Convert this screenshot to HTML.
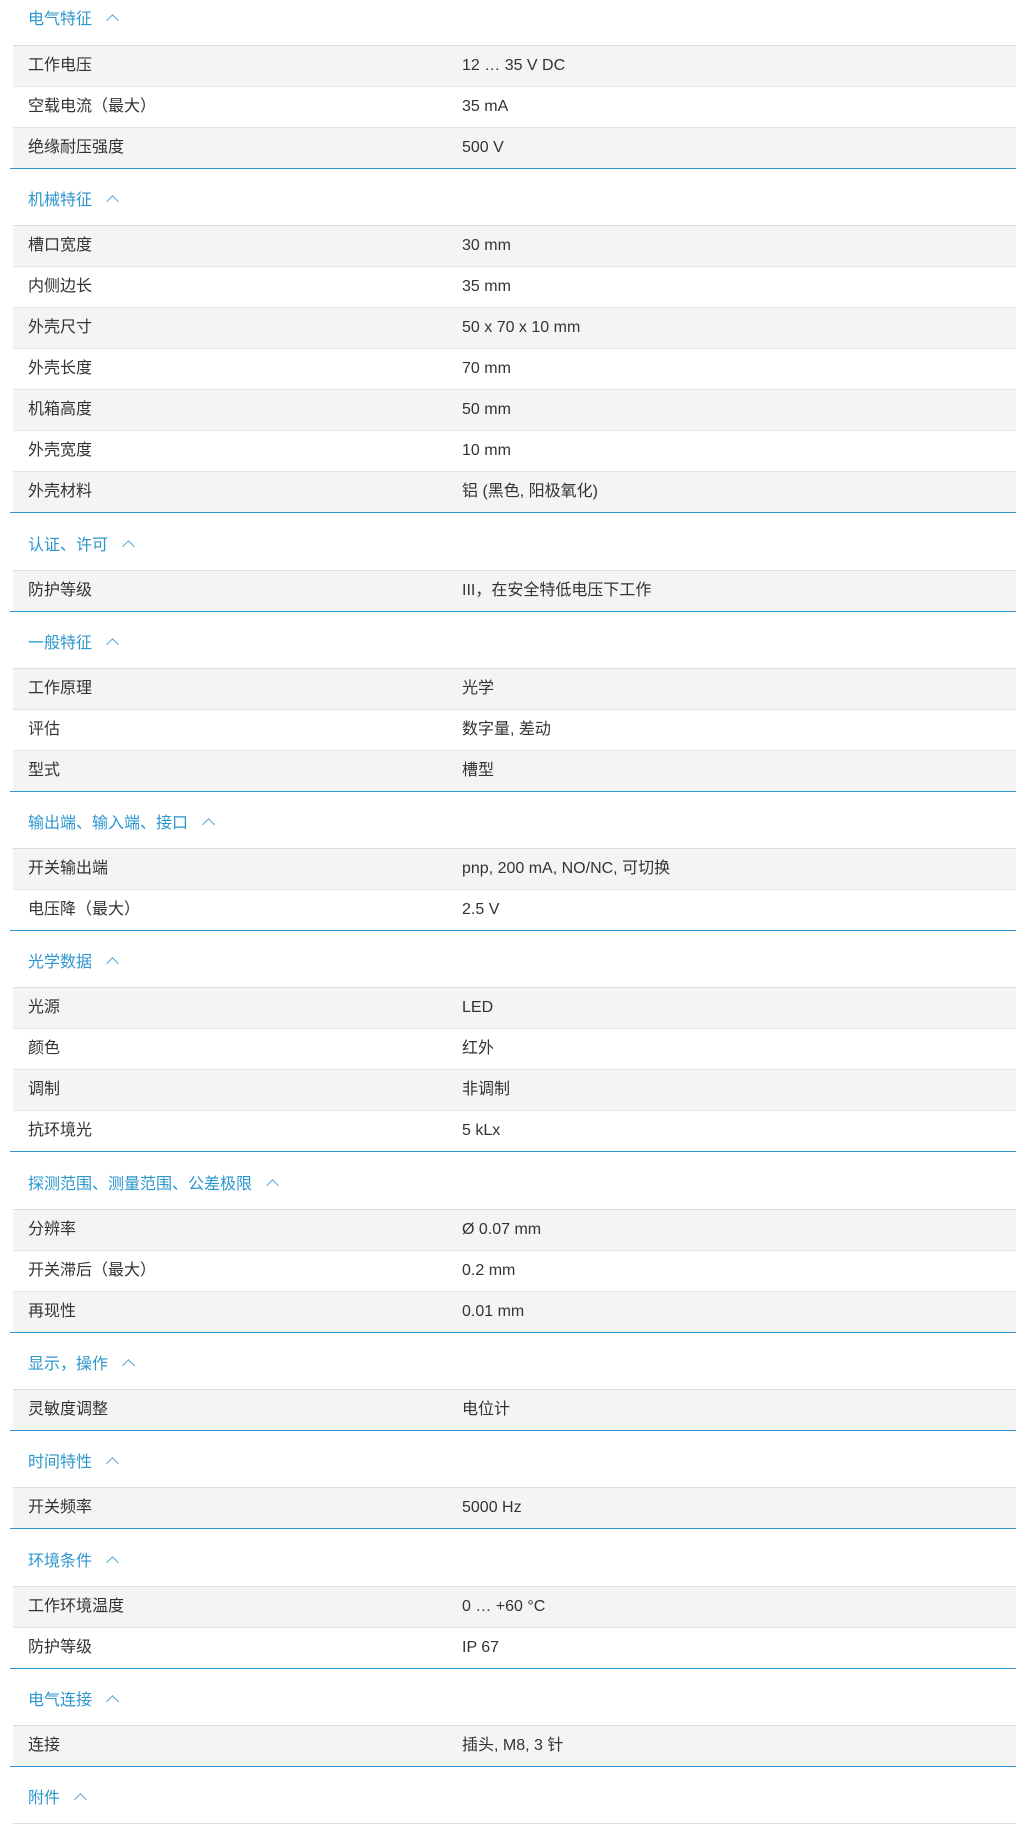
<!DOCTYPE html>
<html><head><meta charset="utf-8"><style>
*{margin:0;padding:0;box-sizing:border-box}
body{width:1016px;height:1801px;overflow:hidden;background:#fff;font-family:"Liberation Sans","Noto Sans CJK SC",sans-serif;font-size:16px;color:#333}
.h{height:57.3px;position:relative;margin-left:13px;border-bottom:1px solid #dedede}
.h.first{height:46px}
.h span{position:absolute;left:15px;bottom:14px;color:#2b96cf;font-size:16px;line-height:20px}
.h.first span{bottom:15px}
.h span i{display:inline-block;width:9px;height:9px;border-left:1.5px solid #5aa7d4;border-top:1.5px solid #5aa7d4;transform:rotate(45deg);margin-left:16px;position:relative;top:1px}
.r{height:41px;margin-left:13px;border-bottom:1px solid #e4e4e4;position:relative;line-height:40px}
.r:nth-of-type(odd){background:#f4f4f4}
.r.last{border-bottom:none;height:40px}
.r b{font-weight:normal;position:absolute;left:15px}
.r em{font-style:normal;position:absolute;left:449px}
.bl{height:1px;margin-left:10px;background:#2b96cf}
.s{position:relative}
</style></head><body>
<div class="s"><div class="h first"><span>电气特征<i></i></span></div>
<div><div class="r"><b>工作电压</b><em>12 … 35 V DC</em></div><div class="r"><b>空载电流（最大）</b><em>35 mA</em></div><div class="r last"><b>绝缘耐压强度</b><em>500 V</em></div></div><div class="bl"></div></div>

<div class="s"><div class="h"><span>机械特征<i></i></span></div>
<div><div class="r"><b>槽口宽度</b><em>30 mm</em></div><div class="r"><b>内侧边长</b><em>35 mm</em></div><div class="r"><b>外壳尺寸</b><em>50 x 70 x 10 mm</em></div><div class="r"><b>外壳长度</b><em>70 mm</em></div><div class="r"><b>机箱高度</b><em>50 mm</em></div><div class="r"><b>外壳宽度</b><em>10 mm</em></div><div class="r last"><b>外壳材料</b><em>铝 (黑色, 阳极氧化)</em></div></div><div class="bl"></div></div>

<div class="s"><div class="h"><span>认证、许可<i></i></span></div>
<div><div class="r last"><b>防护等级</b><em>III，在安全特低电压下工作</em></div></div><div class="bl"></div></div>

<div class="s"><div class="h"><span>一般特征<i></i></span></div>
<div><div class="r"><b>工作原理</b><em>光学</em></div><div class="r"><b>评估</b><em>数字量, 差动</em></div><div class="r last"><b>型式</b><em>槽型</em></div></div><div class="bl"></div></div>

<div class="s"><div class="h"><span>输出端、输入端、接口<i></i></span></div>
<div><div class="r"><b>开关输出端</b><em>pnp, 200 mA, NO/NC, 可切换</em></div><div class="r last"><b>电压降（最大）</b><em>2.5 V</em></div></div><div class="bl"></div></div>

<div class="s"><div class="h"><span>光学数据<i></i></span></div>
<div><div class="r"><b>光源</b><em>LED</em></div><div class="r"><b>颜色</b><em>红外</em></div><div class="r"><b>调制</b><em>非调制</em></div><div class="r last"><b>抗环境光</b><em>5 kLx</em></div></div><div class="bl"></div></div>

<div class="s"><div class="h"><span>探测范围、测量范围、公差极限<i></i></span></div>
<div><div class="r"><b>分辨率</b><em>Ø 0.07 mm</em></div><div class="r"><b>开关滞后（最大）</b><em>0.2 mm</em></div><div class="r last"><b>再现性</b><em>0.01 mm</em></div></div><div class="bl"></div></div>

<div class="s"><div class="h"><span>显示，操作<i></i></span></div>
<div><div class="r last"><b>灵敏度调整</b><em>电位计</em></div></div><div class="bl"></div></div>

<div class="s"><div class="h"><span>时间特性<i></i></span></div>
<div><div class="r last"><b>开关频率</b><em>5000 Hz</em></div></div><div class="bl"></div></div>

<div class="s"><div class="h"><span>环境条件<i></i></span></div>
<div><div class="r"><b>工作环境温度</b><em>0 … +60 °C</em></div><div class="r last"><b>防护等级</b><em>IP 67</em></div></div><div class="bl"></div></div>

<div class="s"><div class="h"><span>电气连接<i></i></span></div>
<div><div class="r last"><b>连接</b><em>插头, M8, 3 针</em></div></div><div class="bl"></div></div>

<div class="s"><div class="h"><span>附件<i></i></span></div></div>
</body></html>
